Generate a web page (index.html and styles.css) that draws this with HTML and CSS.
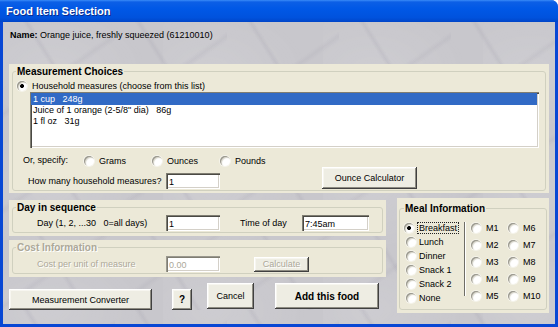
FILE: index.html
```html
<!DOCTYPE html>
<html lang="en">
<head>
    <meta charset="UTF-8">
    <title>Food Item Selection</title>
    <link rel="stylesheet" href="styles.css">
</head>
<body>
    <div class="window">
        <div class="titlebar">Food Item Selection</div>
        <div class="client">
            <div class="name-line"><b>Name:</b> Orange juice, freshly squeezed (61210010)</div>

            <div class="group group-measure">
                <div class="frame">
                    <div class="legend">Measurement Choices</div>
                    <label class="option option-household"><span class="radio checked"></span>Household measures (choose from this list)</label>
                    <div class="listbox">
                        <div class="item selected">1 cup   248g</div>
                        <div class="item">Juice of 1 orange (2-5/8" dia)   86g</div>
                        <div class="item">1 fl oz   31g</div>
                    </div>
                    <div class="specify-row">
                        <span class="specify-label">Or, specify:</span>
                        <label class="option unit"><span class="radio"></span>Grams</label>
                        <label class="option unit"><span class="radio"></span>Ounces</label>
                        <label class="option unit"><span class="radio"></span>Pounds</label>
                    </div>
                    <div class="count-row">
                        <span class="count-label">How many household measures?</span>
                        <input class="field count-field" type="text" value="1">
                        <button class="btn btn-ounce">Ounce Calculator</button>
                    </div>
                </div>
            </div>

            <div class="lower">
                <div class="left-col">
                    <div class="group group-day">
                        <div class="frame">
                            <div class="legend">Day in sequence</div>
                            <div class="field-row">
                                <span class="day-label">Day (1, 2, ...30   0=all days)</span>
                                <input class="field day-field" type="text" value="1">
                                <span class="time-label">Time of day</span>
                                <input class="field time-field" type="text" value="7:45am">
                            </div>
                        </div>
                    </div>

                    <div class="group group-cost disabled">
                        <div class="frame">
                            <div class="legend">Cost Information</div>
                            <div class="field-row">
                                <span class="day-label">Cost per unit of measure</span>
                                <input class="field cost-field" type="text" value="0.00" disabled>
                                <button class="btn btn-calc" disabled>Calculate</button>
                            </div>
                        </div>
                    </div>

                    <div class="button-row">
                        <button class="btn btn-converter">Measurement Converter</button>
                        <button class="btn btn-help">?</button>
                        <button class="btn btn-cancel">Cancel</button>
                        <button class="btn btn-add">Add this food</button>
                    </div>
                </div>

                <div class="group group-meal">
                    <div class="frame">
                        <div class="legend">Meal Information</div>
                        <div class="meal-body">
                            <div class="meal-names">
                                <label class="option meal"><span class="radio checked"></span><span class="focus">Breakfast</span></label>
                                <label class="option meal"><span class="radio"></span>Lunch</label>
                                <label class="option meal"><span class="radio"></span>Dinner</label>
                                <label class="option meal"><span class="radio"></span>Snack 1</label>
                                <label class="option meal"><span class="radio"></span>Snack 2</label>
                                <label class="option meal"><span class="radio"></span>None</label>
                            </div>
                            <div class="separator"></div>
                            <div class="meal-numbers">
                                <label class="option"><span class="radio"></span>M1</label>
                                <label class="option"><span class="radio"></span>M6</label>
                                <label class="option"><span class="radio"></span>M2</label>
                                <label class="option"><span class="radio"></span>M7</label>
                                <label class="option"><span class="radio"></span>M3</label>
                                <label class="option"><span class="radio"></span>M8</label>
                                <label class="option"><span class="radio"></span>M4</label>
                                <label class="option"><span class="radio"></span>M9</label>
                                <label class="option"><span class="radio"></span>M5</label>
                                <label class="option"><span class="radio"></span>M10</label>
                            </div>
                        </div>
                    </div>
                </div>
            </div>
        </div>
    </div>
</body>
</html>
```

FILE: styles.css
```css
* {
    box-sizing: border-box;
}
body {
    margin: 0;
    font-family: "Liberation Sans", Arial, sans-serif;
    font-size: 9px;
    color: #000;
}
.window {
    width: 558px;
    height: 327px;
    display: flex;
    flex-direction: column;
    background: #0847d4;
    border-top-right-radius: 7px;
    overflow: hidden;
}
.titlebar {
    flex: none;
    height: 22px;
    padding-left: 6px;
    line-height: 22px;
    font-size: 11px;
    font-weight: bold;
    color: #fff;
    text-shadow: 1px 1px 0 #0a2c8e;
    background: linear-gradient(#3a8cf8 0, #0c5fe6 2px, #0058e6 40%, #0052dd 80%, #0045c8 100%);
}
/* grey marble backdrop */
.client {
    flex: 1;
    margin: 0 3px 3px;
    padding: 7px 6px 0;
    background-color: #c8c7cc;
    background-image:
        linear-gradient(58deg, transparent 46%, rgba(110,105,130,0.09) 48.5%, transparent 51%),
        linear-gradient(-35deg, transparent 44%, rgba(110,105,130,0.07) 47%, transparent 50%),
        radial-gradient(ellipse at 30% 40%, rgba(255,255,255,0.1), transparent 60%);
    background-size: 112px 96px, 112px 96px, 160px 120px;
}
.name-line {
    margin-left: 1px;
    line-height: 13px;
}

/* group boxes */
.group {
    background: #ece9d8;
    padding: 7px 3px 2px;
}
.frame {
    border: 1px solid #d0d0bf;
    border-radius: 3px;
}
.legend {
    display: table;
    margin: -7px 0 0 3px;
    padding: 0 1px;
    line-height: 13px;
    font-size: 10px;
    font-weight: bold;
    background: #ece9d8;
}
.disabled .legend,
.disabled .day-label {
    color: #aca899;
    text-shadow: 1px 1px 0 #fff;
}

/* radio options */
.option {
    display: flex;
    align-items: center;
    height: 13px;
    white-space: nowrap;
}
.radio {
    flex: none;
    width: 10px;
    height: 10px;
    margin-right: 5px;
    border-radius: 50%;
    background: #fff;
    box-shadow: inset 1px 1px 0 #9a988e, inset 2px 2px 1px #d8d6cc, 0 0 0 1px rgba(255,255,255,0.5);
}
.radio.checked {
    background: radial-gradient(circle at 50% 50%, #000 0, #000 1.6px, #fff 2.3px);
}

/* measurement choices */
.group-measure {
    margin-top: 22px;
}
.group-measure .frame {
    padding-bottom: 1px;
}
.option-household {
    margin: 1px 0 0 4px;
}
.listbox {
    width: 509px;
    height: 56px;
    margin-left: 17px;
    padding: 1px 0 0 1px;
    background: #fff;
    box-shadow: inset 1px 1px #7f7d72, inset 2px 2px #4a4944, inset -1px -1px #fff, inset -2px -2px #d4d0c8;
}
.item {
    height: 11px;
    margin-right: 2px;
    padding-left: 2px;
    line-height: 11px;
    white-space: pre;
}
.item:first-child {
    height: 12px;
    line-height: 13px;
}
.item.selected {
    background: #316ac5;
    color: #fff;
}
.specify-row {
    display: flex;
    margin: 6px 0 0 10px;
}
.specify-label {
    width: 61px;
    line-height: 13px;
}
.unit {
    width: 68px;
}
.count-row {
    display: flex;
    align-items: flex-end;
    height: 22px;
    margin-left: 15px;
}
.count-label {
    width: 138px;
    margin-bottom: 1px;
    line-height: 13px;
}

/* text fields */
.field {
    height: 16px;
    padding: 1px 3px 0;
    border: none;
    outline: none;
    font: inherit;
    color: #000;
    background: #fff;
    box-shadow: inset 1px 1px #7f7d72, inset 2px 2px #4a4944, inset -1px -1px #fff, inset -2px -2px #d4d0c8;
}
.field:disabled {
    color: #aca899;
    box-shadow: inset 1px 1px #9a988e, inset 2px 2px #7f7d72, inset -1px -1px #fff, inset -2px -2px #d4d0c8;
}
.count-field,
.day-field,
.cost-field {
    width: 54px;
}
.time-field {
    width: 67px;
}

/* buttons */
.btn {
    padding: 0;
    border: none;
    font: inherit;
    color: #000;
    background: #eeede3;
    box-shadow: inset -1px -1px #404040, inset 1px 1px #fff, inset -2px -2px #8e8c82, inset 2px 2px #f7f6f0;
}
.btn:disabled {
    color: #aca899;
    text-shadow: 1px 1px 0 #fff;
}
.btn-ounce {
    width: 95px;
    height: 22px;
    margin-left: 102px;
}

/* lower area */
.lower {
    display: flex;
    gap: 11px;
    margin-top: 5px;
}
.left-col {
    width: 377px;
}
.group-day {
    margin-top: 2px;
    padding-bottom: 3px;
}
.group-cost {
    margin-top: 4px;
    padding-bottom: 3px;
}
.group-day .frame,
.group-cost .frame {
    padding-bottom: 1px;
}
.field-row {
    display: flex;
    align-items: center;
    margin-top: 1px;
}
.group-cost .field-row {
    margin-top: 2px;
}
.day-label {
    width: 129px;
    margin-left: 24px;
    white-space: pre;
}
.time-label {
    width: 62px;
    margin-left: 20px;
}
.btn-calc {
    width: 55px;
    height: 15px;
    margin-left: 34px;
}
.button-row {
    display: flex;
    align-items: flex-start;
    margin-top: 6px;
}
.btn-converter {
    width: 143px;
    height: 21px;
    margin-top: 6px;
}
.btn-help {
    width: 20px;
    height: 21px;
    margin: 6px 0 0 20px;
    font-size: 10px;
    font-weight: bold;
}
.btn-cancel {
    width: 47px;
    height: 26px;
    margin-left: 15px;
}
.btn-add {
    width: 104px;
    height: 26px;
    margin-left: 21px;
    font-size: 10px;
    font-weight: bold;
}

/* meal information */
.group-meal {
    width: 152px;
    height: 115px;
    padding: 10px 2px 3px;
}
.group-meal .frame {
    height: 100%;
}
.group-meal .legend {
    margin-left: 4px;
}
.meal-body {
    display: flex;
    margin-left: 4px;
}
.meal-names {
    width: 60px;
    margin-top: 6px;
}
.meal {
    height: 14px;
}
.meal .radio {
    margin-right: 3px;
}
.focus {
    padding: 0 1px;
    line-height: 10px;
    border: 1px dotted #222;
}
.option.meal:not(:first-child) {
    padding-left: 2px;
}
.separator {
    width: 2px;
    height: 74px;
    margin-top: 7px;
    background: #6e6d66;
    border-right: 1px solid #fff;
}
.meal-numbers {
    display: grid;
    grid-template-columns: 37px auto;
    grid-auto-rows: 17px;
    margin: 4px 0 0 5px;
}
.meal-numbers .option {
    height: 17px;
}
```
